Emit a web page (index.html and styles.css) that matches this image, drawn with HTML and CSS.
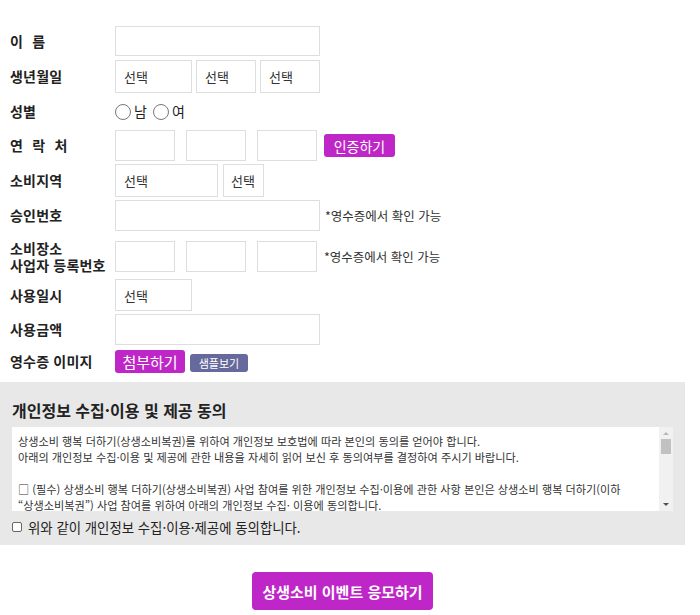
FILE: index.html
```html
<!DOCTYPE html>
<html lang="ko">
<head>
<meta charset="utf-8">
<title>상생소비 이벤트 응모</title>
<link rel="stylesheet" href="styles.css">
</head>
<body>
<div class="page">
  <form class="form">
    <div class="row r-name">
      <span class="label spaced">이 름</span>
      <input class="field w205 h30" type="text">
    </div>
    <div class="row r-birth">
      <span class="label">생년월일</span>
      <div class="group g4">
        <span class="sel w77 h33">선택</span>
        <span class="sel w60 h33">선택</span>
        <span class="sel w60 h33">선택</span>
      </div>
    </div>
    <div class="row r-gender">
      <span class="label">성별</span>
      <div class="radios">
        <label class="radio"><input type="radio" name="g"><span>남</span></label>
        <label class="radio"><input type="radio" name="g"><span>여</span></label>
      </div>
    </div>
    <div class="row r-phone">
      <span class="label spaced">연 락 처</span>
      <div class="group phone">
        <input class="field w60 h31" type="text">
        <input class="field w60 h31" type="text">
        <input class="field w60 h31" type="text">
        <button type="button" class="btn btn-verify">인증하기</button>
      </div>
    </div>
    <div class="row r-region">
      <span class="label">소비지역</span>
      <div class="group g5">
        <span class="sel w103 h33">선택</span>
        <span class="sel w41 h33 tight">선택</span>
      </div>
    </div>
    <div class="row r-approve">
      <span class="label">승인번호</span>
      <div class="group g5">
        <input class="field w205 h31" type="text">
        <span class="note">*영수증에서 확인 가능</span>
      </div>
    </div>
    <div class="row r-biz">
      <span class="label two"><span class="line">소비장소</span><span class="line">사업자 등록번호</span></span>
      <div class="group phone">
        <input class="field w60 h31" type="text">
        <input class="field w60 h31" type="text">
        <input class="field w60 h31" type="text">
        <span class="note">*영수증에서 확인 가능</span>
      </div>
    </div>
    <div class="row r-date">
      <span class="label">사용일시</span>
      <span class="sel w77 h32">선택</span>
    </div>
    <div class="row r-amount">
      <span class="label">사용금액</span>
      <input class="field w205 h31" type="text">
    </div>
    <div class="row r-image">
      <span class="label">영수증 이미지</span>
      <div class="group g5">
        <button type="button" class="btn btn-attach">첨부하기</button>
        <button type="button" class="btn btn-sample">샘플보기</button>
      </div>
    </div>
  </form>

  <section class="agree">
    <h2 class="agree-title">개인정보 수집·이용 및 제공 동의</h2>
    <div class="terms">
      <div class="terms-text">
        <p>상생소비 행복 더하기(상생소비복권)를 위하여 개인정보 보호법에 따라 본인의 동의를 얻어야 합니다.</p>
        <p>아래의 개인정보 수집·이용 및 제공에 관한 내용을 자세히 읽어 보신 후 동의여부를 결정하여 주시기 바랍니다.</p>
        <p>&nbsp;</p>
        <p>□ (필수) 상생소비 행복 더하기(상생소비복권) 사업 참여를 위한 개인정보 수집·이용에 관한 사항 본인은 상생소비 행복 더하기(이하<br>“상생소비복권”) 사업 참여를 위하여 아래의 개인정보 수집· 이용에 동의합니다.</p>
      </div>
      <div class="scrollbar">
        <span class="arrow up"></span>
        <span class="thumb"></span>
        <span class="track"></span>
        <span class="arrow down"></span>
      </div>
    </div>
    <label class="check"><input type="checkbox"><span>위와 같이 개인정보 수집·이용·제공에 동의합니다.</span></label>
  </section>

  <div class="submit-wrap">
    <button type="button" class="btn btn-submit">상생소비 이벤트 응모하기</button>
  </div>
</div>
</body>
</html>
```

FILE: styles.css
```css
* { box-sizing: border-box; }
html, body { margin: 0; padding: 0; background: #fff; }
body {
  font-family: "Noto Sans CJK KR", "Noto Sans", sans-serif;
  color: #222;
}
.page { width: 685px; }

.form { padding: 26px 0 0 10px; }
.row { display: flex; align-items: center; margin-bottom: 4px; }
.label {
  width: 105px;
  flex: none;
  font-size: 14px;
  font-weight: 700;
  line-height: 17px;
  color: #222;
  letter-spacing: 0.2px;
}
.label.spaced { word-spacing: 5px; }
.label.two { display: flex; flex-direction: column; gap: 1px; }
.label .line { display: block; line-height: 16px; }

.group { display: flex; align-items: center; }
.g4 { gap: 4px; }
.g5 { gap: 5px; }
.phone { gap: 11px; }
.phone .btn-verify { margin-left: -4px; }
.phone .note { margin-left: -4px; }

.field, .sel {
  display: block;
  border: 1px solid #dedede;
  background: #fff;
  margin: 0;
  padding: 0 8px;
  font-family: inherit;
  font-size: 13px;
  color: #333;
  outline: none;
}
.sel { display: flex; align-items: center; line-height: 1; white-space: nowrap; }
.sel.tight { padding: 0 0 0 7px; }
.w205 { width: 205px; }
.w103 { width: 103px; }
.w77 { width: 77px; }
.w60 { width: 60px; }
.w41 { width: 41px; }
.h30 { height: 30px; }
.h31 { height: 31px; }
.h32 { height: 32px; }
.h33 { height: 33px; }

.r-gender { height: 29px; }
.r-phone { margin-bottom: 3px; }
.r-region { margin-bottom: 3px; }
.r-biz { height: 42px; margin-bottom: 2px; }
.r-date { margin-bottom: 3px; }
.r-image { height: 25px; }

.radios { display: flex; align-items: center; gap: 6px; }
.radio { display: flex; align-items: center; gap: 3px; font-size: 14px; color: #222; line-height: 17px; }
.radio input {
  appearance: none;
  -webkit-appearance: none;
  width: 16px;
  height: 16px;
  margin: 0;
  border: 1px solid #777;
  border-radius: 50%;
  background: #fff;
}

.note { font-size: 12.5px; color: #333; line-height: 15px; }

.btn {
  border: 0;
  margin: 0;
  padding: 0;
  color: #fff;
  font-family: inherit;
  cursor: pointer;
  display: flex;
  align-items: center;
  justify-content: center;
}
.btn-verify {
  width: 71px; height: 23px;
  background: #bf26c7;
  border-radius: 3px;
  font-size: 14px;
}
.btn-attach {
  width: 70px; height: 23px;
  background: #bf26c7;
  border-radius: 3px;
  font-size: 15px;
}
.btn-sample {
  width: 58px; height: 18px;
  background: #66699b;
  border-radius: 3px;
  font-size: 11px;
  margin-top: 2px;
}

.agree {
  margin-top: 8px;
  background: #e8e8e8;
  padding: 18px 12px 8px 12px;
}
.agree-title {
  margin: 0 0 7px 0;
  font-size: 16px;
  font-weight: 700;
  line-height: 20px;
  color: #222;
}
.terms {
  display: flex;
  height: 84px;
  width: 661px;
  background: #fff;
}
.terms-text {
  flex: 1;
  overflow: hidden;
  padding: 6px 6px 0 6px;
  font-size: 11.15px;
  line-height: 16px;
  color: #333;
}
.terms-text p { margin: 0; }
.scrollbar {
  width: 14px;
  flex: none;
  background: #f1f1f1;
  display: flex;
  flex-direction: column;
  align-items: center;
  padding: 2px 0;
}
.arrow { width: 0; height: 0; border-left: 3px solid transparent; border-right: 3px solid transparent; margin: 3px 0; }
.arrow.up { border-bottom: 3px solid #b8b8b8; }
.arrow.down { border-top: 3px solid #505050; }
.thumb { width: 10px; height: 15px; background: #c1c1c1; margin-top: 1px; }
.track { flex: 1; }

.check {
  display: flex;
  align-items: center;
  gap: 6px;
  height: 20px;
  margin-top: 6px;
  font-size: 13.4px;
  color: #222;
}
.check input {
  appearance: none;
  -webkit-appearance: none;
  width: 10px;
  height: 10px;
  margin: 0;
  border: 1px solid #666;
  border-radius: 2px;
  background: #fff;
}

.submit-wrap { display: flex; justify-content: center; padding-top: 27px; }
.btn-submit {
  width: 181px;
  height: 38px;
  background: #bf26c7;
  border-radius: 4px;
  font-size: 15px;
  font-weight: 700;
}
```
